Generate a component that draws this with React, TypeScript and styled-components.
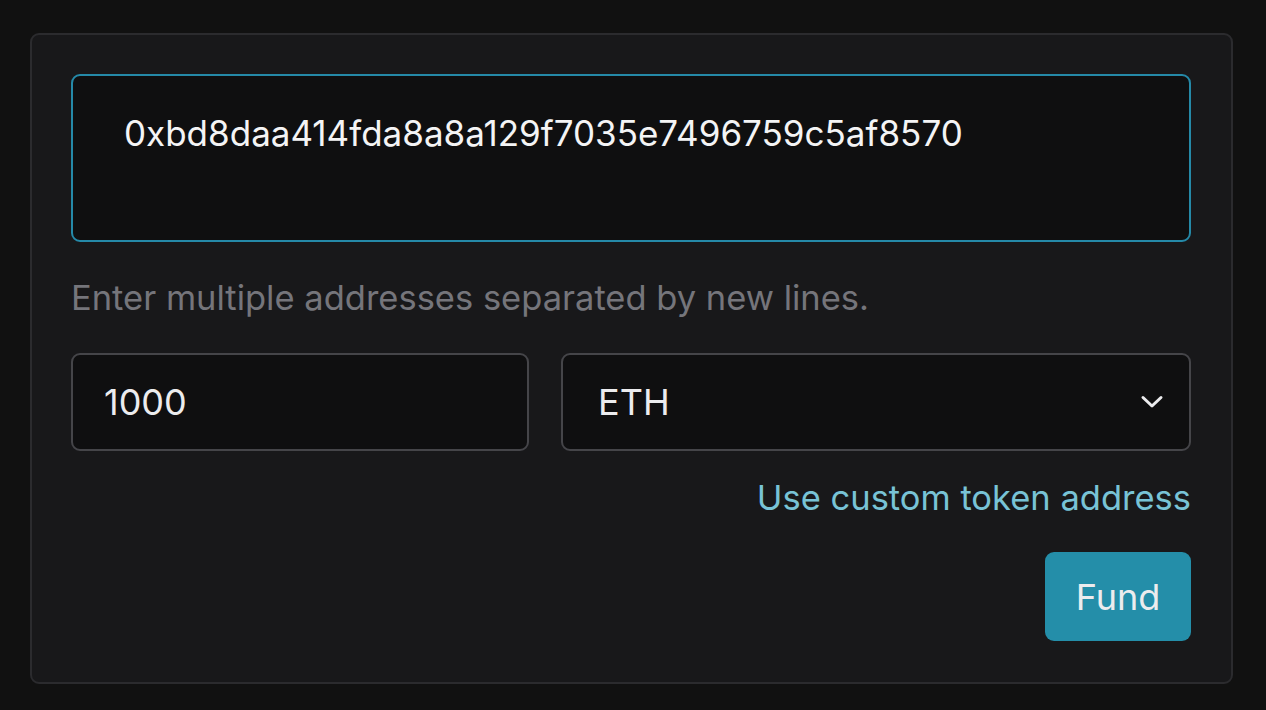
import React from "react";
import styled, { createGlobalStyle } from "styled-components";

const Global = createGlobalStyle`
  html, body { margin: 0; padding: 0; background: #111111; }
  body { font-family: Inter, "Noto Sans", sans-serif; }
  * { box-sizing: border-box; }
`;

const Page = styled.div`
  padding: 33px 0 0 30px;
  min-height: 710px;
  background: #111111;
`;

const Card = styled.div`
  width: 1203px;
  height: 651px;
  background: #18181a;
  border: 2px solid #2b2b2e;
  border-radius: 9px;
  padding: 39px 40px 40px 39px;
  display: flex;
  flex-direction: column;
`;

const AddressBox = styled.div`
  height: 168px;
  background: #0f0f10;
  border: 2px solid #2589a8;
  border-radius: 9px;
  padding: 33px 24px 0 51px;
  color: #f4f4f5;
  font-size: 35px;
  line-height: 48px;
`;

const Helper = styled.div`
  margin-top: 29px;
  color: #75757b;
  font-size: 34.5px;
  line-height: 54px;
`;

const Row = styled.div`
  margin-top: 28px;
  display: grid;
  grid-template-columns: 458px 1fr;
  gap: 32px;
`;

const Field = styled.div<{ $padLeft: number }>`
  height: 98px;
  background: #0f0f10;
  border: 2px solid #454549;
  border-radius: 9px;
  display: flex;
  align-items: center;
  justify-content: space-between;
  padding: 0 25px 0 ${(p) => p.$padLeft}px;
  color: #ececee;
  font-size: 36px;
`;

const LinkRow = styled.div`
  margin-top: 21px;
  display: flex;
  justify-content: flex-end;
`;

const LinkText = styled.span`
  color: #78c3d6;
  font-size: 34.5px;
  line-height: 51px;
`;

const ButtonRow = styled.div`
  margin-top: 29px;
  display: flex;
  justify-content: flex-end;
`;

const FundButton = styled.button`
  width: 146px;
  height: 89px;
  border: none;
  border-radius: 9px;
  background: #248ea9;
  color: #ececee;
  font-family: Inter, "Noto Sans", sans-serif;
  font-size: 36px;
  padding: 0;
`;

const Chevron = () => (
  <svg width="24" height="16" viewBox="0 0 24 16" fill="none">
    <path d="M3 3.5 L12 12 L21 3.5" stroke="#ececee" strokeWidth="3" strokeLinecap="round" strokeLinejoin="round" />
  </svg>
);

export default function App() {
  return (
    <>
      <Global />
      <Page>
        <Card>
          <AddressBox>0xbd8daa414fda8a8a129f7035e7496759c5af8570</AddressBox>
          <Helper>Enter multiple addresses separated by new lines.</Helper>
          <Row>
            <Field $padLeft={31}>1000</Field>
            <Field $padLeft={35}>
              <span>ETH</span>
              <Chevron />
            </Field>
          </Row>
          <LinkRow>
            <LinkText>Use custom token address</LinkText>
          </LinkRow>
          <ButtonRow>
            <FundButton>Fund</FundButton>
          </ButtonRow>
        </Card>
      </Page>
    </>
  );
}
